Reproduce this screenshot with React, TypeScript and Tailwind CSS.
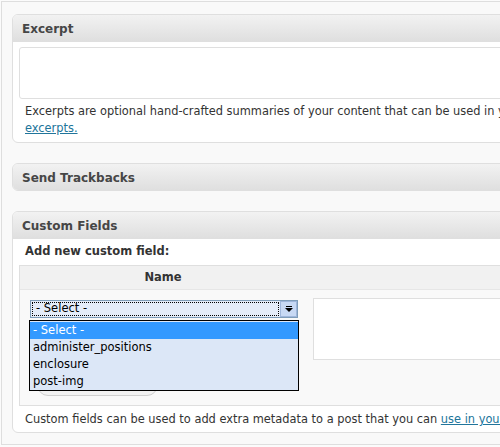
import React from "react";

const font = "font-['DejaVu_Sans',Verdana,sans-serif]";

function PanelHeader({ title }: { title: string }) {
  return (
    <div className="h-[26px] flex items-center pt-[2px] px-[9px] bg-linear-to-b from-[#f2f2f2] to-[#dfdfdf]">
      <h3 className="text-[12px] font-bold text-[#464646] leading-none">{title}</h3>
    </div>
  );
}

const options = ["- Select -", "administer_positions", "enclosure", "post-img"];

export default function App() {
  return (
    <div className={`w-[500px] h-[447px] overflow-hidden bg-[#fbfbfb] pt-px pl-px ${font}`}>
      <div className="h-[444px] w-[560px] border-l border-t border-b border-[#dedede] bg-[#f9f9f9] pl-[10px] pt-[12px] flex flex-col">
        {/* Excerpt */}
        <div className="w-[540px] border border-[#dfdfdf] rounded-[6px] overflow-hidden bg-white">
          <div className="border-b border-[#dfdfdf]">
            <PanelHeader title="Excerpt" />
          </div>
          <div className="px-[6px] pt-[5px] pb-[5px]">
            <div className="h-[52px] border border-[#dfdfdf] rounded-[3px] bg-white" />
            <p className="mt-[4px] px-[6px] text-[11.4px] leading-[17px] text-[#333] whitespace-nowrap">
              Excerpts are optional hand-crafted summaries of your content that can be used in your theme.{" "}
              <br />
              <a className="text-[#21759b] underline">excerpts.</a>
            </p>
          </div>
        </div>

        {/* Send Trackbacks */}
        <div className="mt-[20px] w-[540px] border border-[#dfdfdf] rounded-[6px] overflow-hidden">
          <PanelHeader title="Send Trackbacks" />
        </div>

        {/* Custom Fields */}
        <div className="mt-[20px] w-[540px] border border-[#dfdfdf] rounded-[6px] overflow-hidden bg-white">
          <div className="border-b border-[#dfdfdf]">
            <PanelHeader title="Custom Fields" />
          </div>
          <div className="px-[6px] pt-[5px] pb-[4px]">
            <p className="px-[6px] text-[11.5px] font-bold leading-[14px] text-[#333]">Add new custom field:</p>
            <div className="mt-[7px] w-[800px] border border-[#dfdfdf] bg-[#f9f9f9]">
              <div className="flex h-[24px] bg-[#f1f1f1] border-b border-[#e6e6e6] text-[11.5px] font-bold text-[#333]">
                <div className="w-[286px] flex items-center justify-center">Name</div>
                <div className="flex-1 flex items-center justify-center">Value</div>
              </div>
              <div className="flex h-[115px]">
                <div className="w-[286px] relative pl-[10px] pt-[10px]">
                  {/* select */}
                  <div className="w-[268px] h-[18px] border border-[#7f9db9] bg-[#e4ecf9] flex">
                    <div className="flex-1 m-px border border-dotted border-black flex items-center pl-[3px] text-[11.5px] text-black leading-none">
                      - Select -
                    </div>
                    <div className="w-[17px] h-[16px] bg-[#c8d9f4] border border-[#9fb6db] flex items-center justify-center">
                      <svg width="8" height="6" viewBox="0 0 8 6">
                        <rect x="1" y="0" width="6" height="1" fill="#000" />
                        <path d="M0 2h8l-4 4z" fill="#000" />
                      </svg>
                    </div>
                  </div>
                  {/* button under the open list */}
                  <div className="mt-[56px] ml-[7px] w-[121px] h-[22px] rounded-[11px] border border-[#d0d0d0] bg-[#f2f2f2] flex items-center justify-center pt-[5px] text-[11.5px] text-[#464646]">
                    Add Custom Field
                  </div>
                  {/* open dropdown list */}
                  <div className="absolute left-[9px] top-[30px] w-[270px] border border-black bg-[#dce7f7] pt-px">
                    {options.map((o, i) => (
                      <div
                        key={o}
                        className={
                          i === 0
                            ? "h-[17px] flex items-center pl-[3px] text-[11.5px] text-white bg-[#3399ff]"
                            : "h-[17px] flex items-center pl-[3px] text-[11.5px] text-black"
                        }
                      >
                        {o}
                      </div>
                    ))}
                  </div>
                </div>
                <div className="flex-1 pl-[7px] pt-[8px]">
                  <div className="w-[400px] h-[62px] border border-[#dfdfdf] bg-white" />
                </div>
              </div>
            </div>
            <p className="mt-[5px] px-[6px] text-[11.4px] leading-[17px] text-[#333] whitespace-nowrap">
              Custom fields can be used to add extra metadata to a post that you can{" "}
              <a className="text-[#21759b] underline">use in your theme</a>.
            </p>
          </div>
        </div>
      </div>
    </div>
  );
}
